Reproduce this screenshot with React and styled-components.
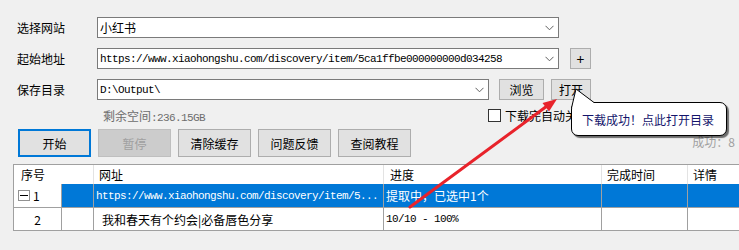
import styled, { createGlobalStyle, css } from "styled-components";

const GlobalStyle = createGlobalStyle`
  html, body {
    margin: 0;
    padding: 0;
    background: #f0f0f0;
  }
  body {
    font-family: "Noto Sans CJK SC", "Noto Sans", sans-serif;
    font-size: 12px;
    color: #000;
  }
`;

const MONO = `"Liberation Mono", "DejaVu Sans Mono", "Noto Sans CJK SC", monospace`;

const COLS = "48px 32px 290px 218px 86px 200px";

const Window = styled.div`
  position: relative;
  width: 739px;
  height: 250px;
  overflow: hidden;
  background: #f0f0f0;
`;

const Form = styled.div`
  display: flex;
  flex-direction: column;
  padding-top: 17px;
`;

const FieldRow = styled.div`
  display: flex;
  align-items: center;
  height: 21px;
  padding-left: 17px;
  margin-top: ${(p) => p.$mt || 0}px;
`;

const Label = styled.div`
  width: 80px;
  font-size: 12px;
  line-height: 21px;
`;

const ComboBox = styled.div`
  box-sizing: border-box;
  width: ${(p) => p.$w}px;
  height: 21px;
  display: flex;
  align-items: center;
  padding: 0 4px 0 2px;
  background: #fff;
  border: 1px solid #7a7a7a;
`;

const ComboText = styled.span`
  flex: 1;
  white-space: nowrap;
  overflow: hidden;
  ${(p) =>
    p.$mono
      ? css`
          font-family: ${MONO};
          font-size: 11px;
          letter-spacing: -0.6px;
        `
      : css`
          font-size: 12px;
        `}
`;

const Mono = styled.span`
  font-family: ${MONO};
  font-size: 11px;
  letter-spacing: -0.6px;
`;

const SmallButton = styled.button`
  box-sizing: border-box;
  width: ${(p) => p.$w}px;
  height: 21px;
  margin-left: ${(p) => p.$ml || 0}px;
  padding: 0;
  background: #e1e1e1;
  border: 1px solid #adadad;
  font-family: inherit;
  font-size: ${(p) => (p.$big ? 14 : 12)}px;
  color: #000;
  line-height: 1;
`;

const InfoRow = styled.div`
  display: flex;
  align-items: center;
  height: 14px;
  margin-top: 8px;
  padding-left: 103px;
`;

const FreeSpace = styled.div`
  width: 385px;
  color: #6d6d6d;
  font-size: 12px;
  white-space: nowrap;
`;

const CheckBox = styled.span`
  box-sizing: border-box;
  width: 13px;
  height: 13px;
  background: #fff;
  border: 1px solid #333;
  margin-right: 4px;
`;

const CheckLabel = styled.span`
  font-size: 12px;
  white-space: nowrap;
`;

const ButtonRow = styled.div`
  display: flex;
  align-items: center;
  gap: 7px;
  height: 28px;
  margin-top: 7px;
  padding-left: 18px;
`;

const ActionButton = styled.button`
  box-sizing: border-box;
  width: 73px;
  height: 28px;
  padding: 0;
  background: ${(p) => (p.disabled ? "#cccccc" : "#e1e1e1")};
  border: ${(p) =>
    p.$primary ? "2px solid #0078d7" : p.disabled ? "1px solid #bfbfbf" : "1px solid #adadad"};
  color: ${(p) => (p.disabled ? "#a0a0a0" : "#000")};
  font-family: inherit;
  font-size: 12px;
`;

const Stat = styled.span`
  margin-left: auto;
  margin-right: 4px;
  margin-top: -4px;
  color: #a0a0a0;
  font-size: 12px;
  white-space: nowrap;
`;

const Table = styled.div`
  width: 800px;
  margin: 7px 0 0 13px;
  border: 1px solid #a0a0a0;
  border-right: none;
  background: #fff;
`;

const Row = styled.div`
  display: grid;
  grid-template-columns: ${COLS};
  height: ${(p) => p.$h}px;
  border-bottom: ${(p) => (p.$line ? "1px solid #a0a0a0" : "none")};
`;

const HeadCell = styled.div`
  grid-column: span ${(p) => p.$span || 1};
  display: flex;
  align-items: center;
  padding-left: ${(p) => p.$pad}px;
  border-right: 1px solid #e3e3e3;
  font-size: 12px;
  white-space: nowrap;
`;

const Cell = styled.div`
  display: flex;
  align-items: center;
  justify-content: ${(p) => (p.$center ? "center" : "flex-start")};
  padding-left: ${(p) => p.$pad || 0}px;
  border-right: 1px solid #a0a0a0;
  overflow: hidden;
  white-space: nowrap;
  font-size: 12px;
  background: ${(p) => (p.$selected ? "#0078d7" : "#fff")};
  color: ${(p) => (p.$selected ? "#fff" : "#000")};
`;

const TreeToggle = styled.span`
  box-sizing: border-box;
  display: inline-flex;
  align-items: center;
  justify-content: center;
  width: 12px;
  height: 11px;
  margin-right: 3px;
  border: 1px solid #919191;
  &::after {
    content: "";
    width: 8px;
    height: 1px;
    background: #000;
  }
`;

const Balloon = styled.div`
  position: absolute;
  left: 571px;
  top: 102px;
  box-sizing: border-box;
  width: 156px;
  height: 34px;
  padding-left: 10px;
  display: flex;
  align-items: center;
  background: #fff;
  border: 1px solid #000;
  border-radius: 7px;
  box-shadow: 2px 2px 1px rgba(0, 0, 0, 0.55);
  color: #14146b;
  font-size: 12px;
  white-space: nowrap;
`;

const BalloonTail = styled.svg`
  position: absolute;
  left: 568px;
  top: 86px;
`;

const Overlay = styled.svg`
  position: absolute;
  left: 0;
  top: 0;
  pointer-events: none;
`;

const Chevron = () => (
  <svg width="9" height="6" viewBox="0 0 9 6">
    <polyline points="0.5,0.8 4.5,4.8 8.5,0.8" fill="none" stroke="#606060" strokeWidth="1" />
  </svg>
);

export default function App() {
  return (
    <Window>
      <GlobalStyle />
      <Form>
        <FieldRow>
          <Label>选择网站</Label>
          <ComboBox $w={462}>
            <ComboText>小红书</ComboText>
            <Chevron />
          </ComboBox>
        </FieldRow>
        <FieldRow $mt={10}>
          <Label>起始地址</Label>
          <ComboBox $w={462}>
            <ComboText $mono>https://www.xiaohongshu.com/discovery/item/5ca1ffbe000000000d034258</ComboText>
            <Chevron />
          </ComboBox>
          <SmallButton $w={21} $ml={11} $big>+</SmallButton>
        </FieldRow>
        <FieldRow $mt={10}>
          <Label>保存目录</Label>
          <ComboBox $w={392}>
            <ComboText $mono>D:\Output\</ComboText>
            <Chevron />
          </ComboBox>
          <SmallButton $w={45} $ml={10}>浏览</SmallButton>
          <SmallButton $w={40} $ml={7}>打开</SmallButton>
        </FieldRow>
        <InfoRow>
          <FreeSpace>
            剩余空间<Mono>:236.15GB</Mono>
          </FreeSpace>
          <CheckBox />
          <CheckLabel>下载完自动关闭</CheckLabel>
        </InfoRow>
        <ButtonRow>
          <ActionButton $primary>开始</ActionButton>
          <ActionButton disabled>暂停</ActionButton>
          <ActionButton>清除缓存</ActionButton>
          <ActionButton>问题反馈</ActionButton>
          <ActionButton>查阅教程</ActionButton>
          <Stat>成功：8</Stat>
        </ButtonRow>
        <Table>
          <Row $h={19}>
            <HeadCell $span={2} $pad={7}>序号</HeadCell>
            <HeadCell $pad={5}>网址</HeadCell>
            <HeadCell $pad={6}>进度</HeadCell>
            <HeadCell $pad={5}>完成时间</HeadCell>
            <HeadCell $pad={5}>详情</HeadCell>
          </Row>
          <Row $h={23} $line>
            <Cell $pad={4}>
              <TreeToggle />1
            </Cell>
            <Cell $selected />
            <Cell $selected $pad={2}>
              <Mono>https://www.xiaohongshu.com/discovery/item/5...</Mono>
            </Cell>
            <Cell $selected $pad={2}>提取中，已选中1个</Cell>
            <Cell $selected />
            <Cell $selected />
          </Row>
          <Row $h={22}>
            <Cell $center>2</Cell>
            <Cell />
            <Cell $pad={8}>我和春天有个约会|必备唇色分享</Cell>
            <Cell $pad={2}>
              <Mono>10/10 - 100%</Mono>
            </Cell>
            <Cell />
            <Cell />
          </Row>
        </Table>
      </Form>

      <Balloon>下载成功！点此打开目录</Balloon>
      <BalloonTail width="32" height="26" viewBox="0 0 32 26">
        <polygon points="3.5,22 8,3 26,16.5 26,22" fill="#fff" />
        <polyline points="3.5,22 8,3 26,16.5" fill="none" stroke="#000" strokeWidth="1" />
      </BalloonTail>

      <Overlay width="739" height="250" viewBox="0 0 739 250">
        <line x1="410" y1="207" x2="547" y2="106" stroke="#e8232b" strokeWidth="3" strokeLinecap="round" />
        <polygon points="557,99 542.5,103 549,111.5" fill="#e8232b" />
      </Overlay>
    </Window>
  );
}
